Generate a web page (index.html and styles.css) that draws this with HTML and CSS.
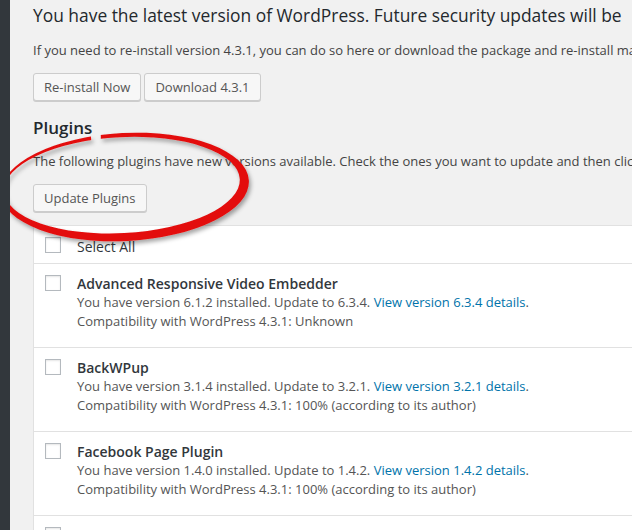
FILE: index.html
```html
<!DOCTYPE html>
<html lang="en">
<head>
    <meta charset="UTF-8">
    <title>WordPress Updates</title>
    <link rel="stylesheet" href="styles.css">
</head>
<body>
    <div class="admin">
        <div class="sidebar"></div>

        <div class="wrap">
            <h2 class="latest">You have the latest version of WordPress. Future security updates will be</h2>
            <p class="note">If you need to re-install version 4.3.1, you can do so here or download the package and re-install manually:</p>
            <div class="actions">
                <button class="button">Re-install Now</button>
                <button class="button">Download 4.3.1</button>
            </div>

            <h3 class="section">Plugins</h3>
            <p class="note">The following plugins have new versions available. Check the ones you want to update and then click &ldquo;Update Plugins&rdquo;.</p>
            <div class="actions">
                <button class="button">Update Plugins</button>
            </div>

            <div class="plugins">
                <div class="row head">
                    <span class="check"></span>
                    <span class="label">Select All</span>
                </div>
                <div class="row">
                    <span class="check"></span>
                    <div class="info">
                        <div class="title">Advanced Responsive Video Embedder</div>
                        <div>You have version 6.1.2 installed. Update to 6.3.4. <a href="#">View version 6.3.4 details</a>.</div>
                        <div>Compatibility with WordPress 4.3.1: Unknown</div>
                    </div>
                </div>
                <div class="row">
                    <span class="check"></span>
                    <div class="info">
                        <div class="title">BackWPup</div>
                        <div>You have version 3.1.4 installed. Update to 3.2.1. <a href="#">View version 3.2.1 details</a>.</div>
                        <div>Compatibility with WordPress 4.3.1: 100% (according to its author)</div>
                    </div>
                </div>
                <div class="row">
                    <span class="check"></span>
                    <div class="info">
                        <div class="title">Facebook Page Plugin</div>
                        <div>You have version 1.4.0 installed. Update to 1.4.2. <a href="#">View version 1.4.2 details</a>.</div>
                        <div>Compatibility with WordPress 4.3.1: 100% (according to its author)</div>
                    </div>
                </div>
                <div class="row">
                    <span class="check"></span>
                    <div class="info">
                        <div class="title">Google Analytics Dashboard for WP</div>
                    </div>
                </div>
            </div>

            <!-- red marker circle drawn over the screenshot -->
            <svg class="marker" width="270" height="140" viewBox="0 0 270 140">
                <defs>
                    <filter id="shade" x="-10%" y="-10%" width="130%" height="140%">
                        <feDropShadow dx="2" dy="3" stdDeviation="2" flood-color="#000" flood-opacity="0.35"/>
                    </filter>
                    <mask id="gap">
                        <rect x="-20" y="-20" width="310" height="180" fill="#fff"/>
                        <polygon points="93,0 104,0 103,30 94,30" fill="#000"/>
                    </mask>
                </defs>
                <g filter="url(#shade)">
                    <g transform="rotate(-3 125 68)" mask="url(#gap)">
                        <path fill="#e3100f" fill-rule="evenodd"
                              d="M1,69 a124,54 0 1,0 248,0 a124,54 0 1,0 -248,0 Z
                                 M4,67 a118,48 0 1,0 236,0 a118,48 0 1,0 -236,0 Z"/>
                    </g>
                </g>
            </svg>
        </div>
    </div>
</body>
</html>
```

FILE: styles.css
```css
html, body {
    margin: 0;
    height: 100%;
    overflow: hidden;
}
body {
    font-family: "Open Sans", "Liberation Sans", sans-serif;
    font-size: 13px;
    line-height: 19px;
    color: #444;
    background-color: #f1f1f1;
}
.admin {
    display: flex;
    height: 100%;
}
.sidebar {
    width: 10px;
    flex-shrink: 0;
    background-color: #32373c;
}
.wrap {
    position: relative;
    flex: 1;
    min-width: 0;
    padding-left: 23px;
    white-space: nowrap;
    overflow: hidden;
}
.latest {
    margin: 3px 0 0;
    font-size: 17.4px;
    font-weight: 400;
    line-height: 24px;
    color: #23282d;
}
.note {
    margin: 14px 0 13px;
}
.actions {
    display: flex;
    gap: 3px;
}
.button {
    height: 28px;
    padding: 0 10px;
    font-family: inherit;
    font-size: 13px;
    color: #555;
    background-color: #f7f7f7;
    border: 1px solid #ccc;
    border-radius: 3px;
    box-shadow: 0 1px 0 #ccc;
}
.section {
    margin: 15px 0 0;
    font-size: 17px;
    font-weight: 600;
    line-height: 24px;
    color: #23282d;
}
.section + .note {
    margin-top: 12px;
}
.plugins {
    margin-top: 13px;
    background-color: #fff;
    border-top: 1px solid #e1e1e1;
    border-left: 1px solid #e1e1e1;
}
.row {
    display: flex;
    align-items: flex-start;
    gap: 16px;
    height: 84px;
    padding: 10px 0 0 11px;
    box-sizing: border-box;
    border-bottom: 1px solid #e1e1e1;
}
.row.head {
    height: 38px;
    padding-top: 0;
    align-items: center;
    font-size: 14px;
    color: #32373c;
}
.row.head .label {
    padding-top: 3px;
}
.check {
    width: 16px;
    height: 16px;
    flex-shrink: 0;
    margin-top: 1px;
    border: 1px solid #b4b9be;
    background-color: #fff;
    box-shadow: inset 0 1px 2px rgba(0, 0, 0, 0.1);
    box-sizing: border-box;
}
.row.head .check {
    margin-top: 0;
}
.info {
    color: #555;
}
.title {
    font-size: 14px;
    font-weight: 600;
    color: #32373c;
}
a {
    color: #0073aa;
    text-decoration: none;
}
.marker {
    position: absolute;
    left: -10px;
    top: 118px;
    pointer-events: none;
}
```
